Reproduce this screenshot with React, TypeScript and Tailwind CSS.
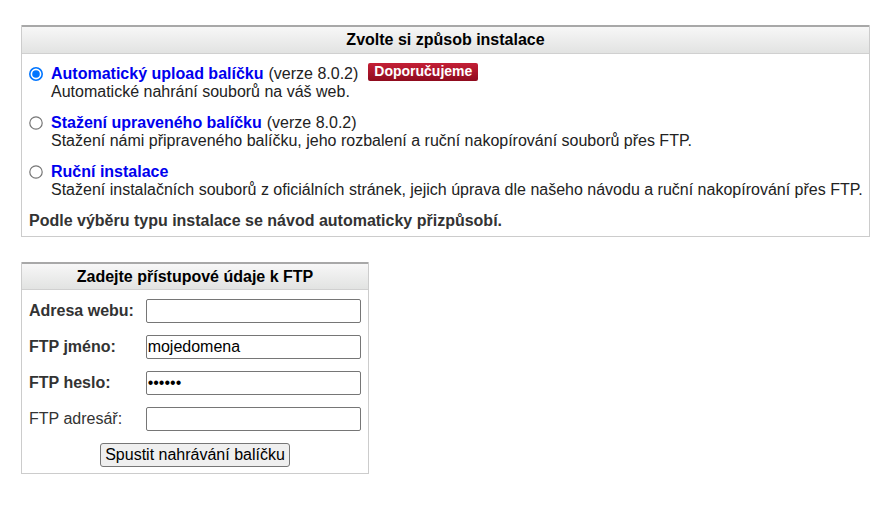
import React from "react";

const font = { fontFamily: '"Liberation Sans", Arial, sans-serif' };

function Radio({ checked }: { checked?: boolean }) {
  return (
    <svg width="14" height="14" viewBox="0 0 14 14" className="shrink-0">
      {checked ? (
        <>
          <circle cx="7" cy="7" r="6.2" fill="#fff" stroke="#0075ff" strokeWidth="1.6" />
          <circle cx="7" cy="7" r="3.8" fill="#0075ff" />
        </>
      ) : (
        <circle cx="7" cy="7" r="6.2" fill="#fff" stroke="#767676" strokeWidth="1.2" />
      )}
    </svg>
  );
}

function Option({
  checked,
  title,
  version,
  badge,
  desc,
}: {
  checked?: boolean;
  title: string;
  version?: string;
  badge?: boolean;
  desc: string;
}) {
  return (
    <div className="flex items-start gap-[8px]">
      <div className="pt-[2px]">
        <Radio checked={checked} />
      </div>
      <div className="whitespace-nowrap leading-[18px]">
        <div className="flex items-center">
          <span className="font-bold text-[#0000ee]">{title}</span>
          {version && <span className="ml-[5px] text-[#222]">{version}</span>}
          {badge && (
            <span className="ml-[10px] mt-[-4px] inline-block h-[18px] rounded-[2px] bg-gradient-to-b from-[#c41f36] to-[#8f0b1e] px-[6px] text-[14px] font-bold leading-[17px] text-white">
              Doporučujeme
            </span>
          )}
        </div>
        <div className="text-[#222]">{desc}</div>
      </div>
    </div>
  );
}

function Field({
  label,
  bold = true,
  value,
  password,
}: {
  label: string;
  bold?: boolean;
  value?: string;
  password?: boolean;
}) {
  return (
    <div className="flex h-[36px] items-center">
      <label className={`w-[117px] ${bold ? "font-bold" : ""} text-[#333]`}>{label}</label>
      <input
        type={password ? "password" : "text"}
        defaultValue={value}
        className="h-[24px] w-[216px] rounded-[2px] border border-[#767676] bg-white px-[1px] text-[16px] text-black outline-none"
        style={font}
      />
    </div>
  );
}

export default function App() {
  return (
    <div className="min-h-[506px] bg-white px-[21px] pt-[25px] text-[16px] text-[#222]" style={font}>
      <div className="w-[849px] border border-t-0 border-[#cccccc]">
        <div className="flex h-[29px] items-center justify-center border-t-2 border-t-[#a8a8a8] border-b border-b-[#d0d0d0] bg-gradient-to-b from-[#f7f7f7] to-[#e2e3e2] font-bold text-black">
          Zvolte si způsob instalace
        </div>
        <div className="flex flex-col gap-[13px] px-[7px] pb-[6px] pt-[11px]">
          <Option
            checked
            title="Automatický upload balíčku"
            version="(verze 8.0.2)"
            badge
            desc="Automatické nahrání souborů na váš web."
          />
          <Option
            title="Stažení upraveného balíčku"
            version="(verze 8.0.2)"
            desc="Stažení námi připraveného balíčku, jeho rozbalení a ruční nakopírování souborů přes FTP."
          />
          <Option
            title="Ruční instalace"
            desc="Stažení instalačních souborů z oficiálních stránek, jejich úprava dle našeho návodu a ruční nakopírování přes FTP."
          />
          <div className="font-bold leading-[18px] text-[#333]">
            Podle výběru typu instalace se návod automaticky přizpůsobí.
          </div>
        </div>
      </div>

      <div className="mt-[25px] w-[348px] border border-t-0 border-[#cccccc]">
        <div className="flex h-[28px] items-center justify-center border-t-2 border-t-[#a8a8a8] border-b border-b-[#d0d0d0] bg-gradient-to-b from-[#f7f7f7] to-[#e2e3e2] font-bold text-black">
          Zadejte přístupové údaje k FTP
        </div>
        <div className="px-[7px] pt-[3px]">
          <Field label="Adresa webu:" />
          <Field label="FTP jméno:" value="mojedomena" />
          <Field label="FTP heslo:" value="secret" password />
          <Field label="FTP adresář:" bold={false} />
          <div className="flex justify-center pb-[6px] pt-[6px]">
            <button
              className="h-[24px] rounded-[3px] border border-[#767676] bg-[#efefef] px-[4px] text-[16px] leading-[20px] text-black"
              style={font}
            >
              Spustit nahrávání balíčku
            </button>
          </div>
        </div>
      </div>
    </div>
  );
}
